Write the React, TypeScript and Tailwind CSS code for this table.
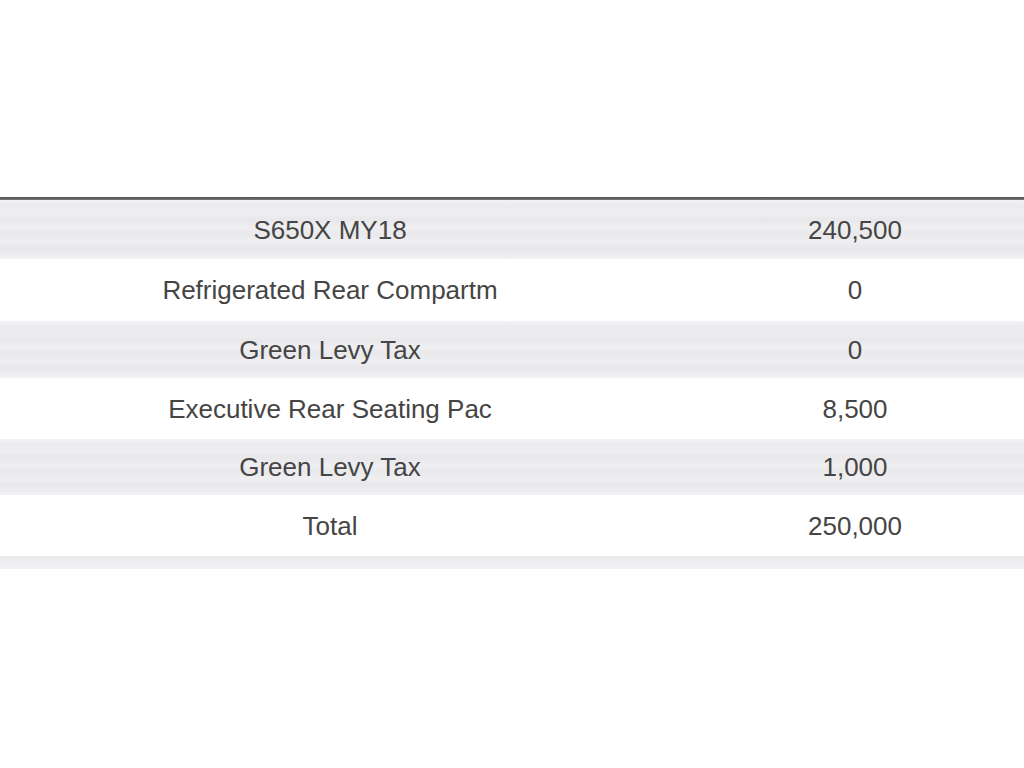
const rows = [
  { label: 'S650X MY18', value: '240,500', shaded: true, h: 'h-[59px]' },
  { label: 'Refrigerated Rear Compartm', value: '0', shaded: false, h: 'h-[62px]' },
  { label: 'Green Levy Tax', value: '0', shaded: true, h: 'h-[57px]' },
  { label: 'Executive Rear Seating Pac', value: '8,500', shaded: false, h: 'h-[61px]' },
  { label: 'Green Levy Tax', value: '1,000', shaded: true, h: 'h-[56px]' },
  { label: 'Total', value: '250,000', shaded: false, h: 'h-[61px]' },
]

// brushed-metal stripe for the shaded rows
const brushed =
  'bg-[linear-gradient(180deg,#f3f3f5_0%,#ebebed_10%,#eeeef0_22%,#e8e8ea_34%,#efeff1_46%,#e9e9eb_58%,#efeff1_70%,#e8e8ea_82%,#ededef_92%,#f2f2f4_100%)]'

const PriceRow = ({ label, value, shaded, h }: (typeof rows)[number]) => (
  <div className={`flex items-center ${h} ${shaded ? brushed : 'bg-white'}`}>
    <div className="w-[660px] text-center">{label}</div>
    <div className="w-[26px]" />
    <div className="flex-1 text-center">{value}</div>
  </div>
)

export default function App() {
  return (
    <div
      className="w-[1024px] h-[768px] bg-white pt-[197px] text-[26px] text-[#454545] leading-none"
      style={{ fontFamily: '"Liberation Sans", Arial, sans-serif' }}
    >
      <div className="h-[3px] bg-[linear-gradient(180deg,#4f4f4f,#777777)]" />
      {rows.map((r, i) => (
        <PriceRow key={i} {...r} />
      ))}
      <div className="h-[13px] bg-[linear-gradient(180deg,#e9e9eb,#f2f2f4)]" />
    </div>
  )
}
